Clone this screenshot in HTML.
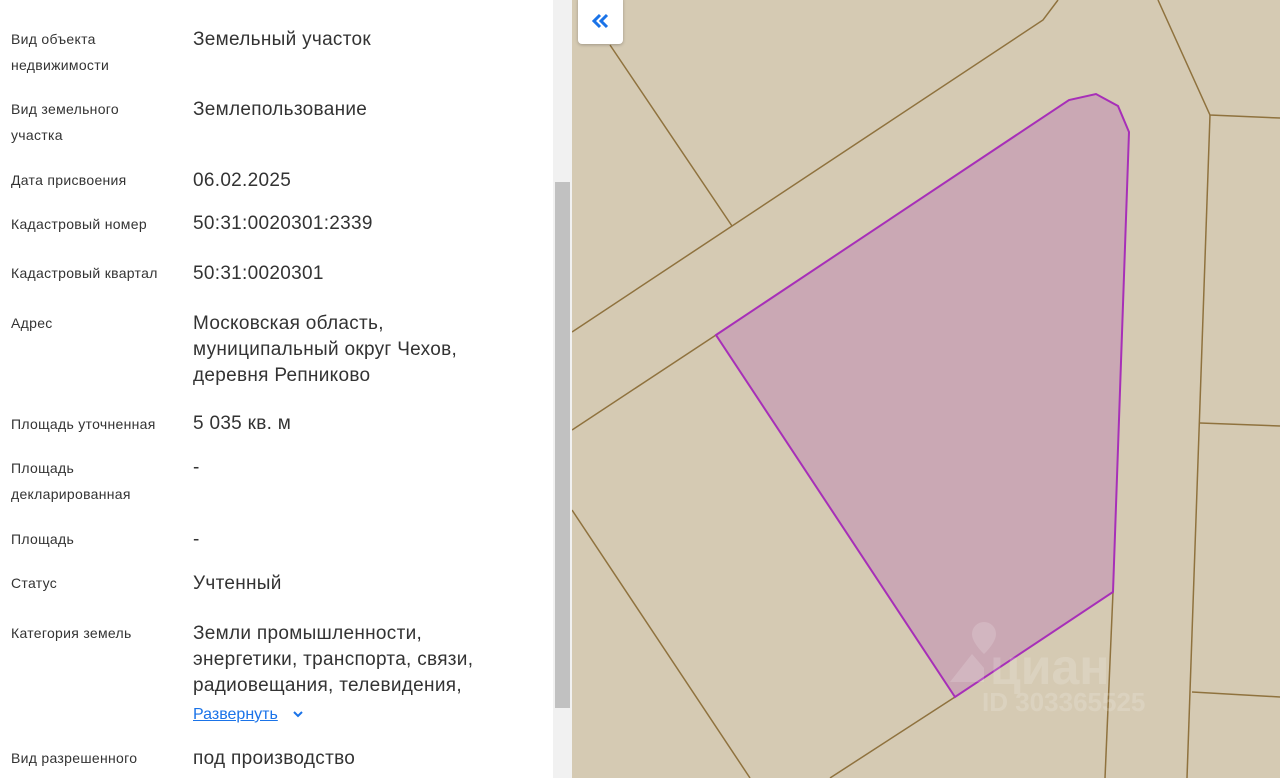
<!DOCTYPE html>
<html><head><meta charset="utf-8"><style>
body{margin:0;width:1280px;height:778px;overflow:hidden;background:#fff;font-family:"Liberation Sans",sans-serif;position:relative}
.l{position:absolute;left:11px;font-size:14px;letter-spacing:0.3px;color:#333;line-height:26px;transform:translateY(-13px);white-space:nowrap}
.v{position:absolute;left:193px;font-size:19px;letter-spacing:0.3px;color:#333;line-height:26px;transform:translateY(-11px);white-space:nowrap}
.a{color:#1a73e8;text-decoration:underline;font-size:16px;letter-spacing:0}
</style></head><body>
<div class="l" style="top:39px">Вид объекта<br>недвижимости</div>
<div class="v" style="top:38px">Земельный участок</div>
<div class="l" style="top:109px">Вид земельного<br>участка</div>
<div class="v" style="top:108px">Землепользование</div>
<div class="l" style="top:180px">Дата присвоения</div>
<div class="v" style="top:179px">06.02.2025</div>
<div class="l" style="top:224px">Кадастровый номер</div>
<div class="v" style="top:222px">50:31:0020301:2339</div>
<div class="l" style="top:273px">Кадастровый квартал</div>
<div class="v" style="top:272px">50:31:0020301</div>
<div class="l" style="top:323px">Адрес</div>
<div class="v" style="top:322px">Московская область,<br>муниципальный округ Чехов,<br>деревня Репниково</div>
<div class="l" style="top:424px">Площадь уточненная</div>
<div class="v" style="top:422px">5 035 кв. м</div>
<div class="l" style="top:468px">Площадь<br>декларированная</div>
<div class="v" style="top:466px">-</div>
<div class="l" style="top:539px">Площадь</div>
<div class="v" style="top:538px">-</div>
<div class="l" style="top:583px">Статус</div>
<div class="v" style="top:582px">Учтенный</div>
<div class="l" style="top:633px">Категория земель</div>
<div class="v" style="top:632px">Земли промышленности,<br>энергетики, транспорта, связи,<br>радиовещания, телевидения,</div>
<div class="v" style="top:712px"><span class="a">Развернуть</span> <svg width="14" height="10" viewBox="0 0 14 10" style="margin-left:8px"><path d="M3 3l4 4 4-4" stroke="#1a73e8" stroke-width="2" fill="none"/></svg></div>
<div class="l" style="top:758px">Вид разрешенного</div>
<div class="v" style="top:757px">под производство</div>
<div style="position:absolute;left:553px;top:0;width:19px;height:778px;background:#f1f1f1"></div>
<div style="position:absolute;left:555px;top:182px;width:15px;height:526px;background:#c1c1c1"></div>
<svg style="position:absolute;left:572px;top:0" width="708" height="778" viewBox="572 0 708 778">
<rect x="572" y="0" width="708" height="778" fill="#d5cab3"/>
<g stroke="#8f723e" stroke-width="1.5" fill="none">
<path d="M572 332L1043 20L1058 0"/>
<path d="M572 430L716 335"/>
<path d="M610 45L732 226"/>
<path d="M1158 0L1210 115L1280 118"/>
<path d="M1210 115L1187 778"/>
<path d="M1200 423L1280 426"/>
<path d="M1192 692L1280 697"/>
<path d="M1113 592L1105 778"/>
<path d="M572 510L750 778"/>
<path d="M830 778L955 697"/>
</g>
<path d="M716 335L1069 100L1096 94L1118 106L1129 132L1113 592L955 697Z" fill="#caa8b4" stroke="#a72fb8" stroke-width="2"/>
<g fill="#fff" opacity="0.16" font-family="Liberation Sans" font-weight="bold">
<path d="M984 622a12 12 0 0 1 12 12c0 9-12 20-12 20s-12-11-12-20a12 12 0 0 1 12-12z"/>
<path d="M950 682l22-28 12 14v14z"/>
<text x="990" y="684" font-size="50">циан</text>
<text x="982" y="711" font-size="26">ID 303365525</text>
</g>
</svg>
<div style="position:absolute;left:578px;top:-4px;width:45px;height:48px;background:#fff;border-radius:4px;box-shadow:0 1px 3px rgba(0,0,0,.25)">
<svg width="45" height="48" viewBox="0 0 45 48"><path d="M22 19l-6 6 6 6M29 19l-6 6 6 6" stroke="#1a73e8" stroke-width="3" fill="none"/></svg></div>
</body></html>
